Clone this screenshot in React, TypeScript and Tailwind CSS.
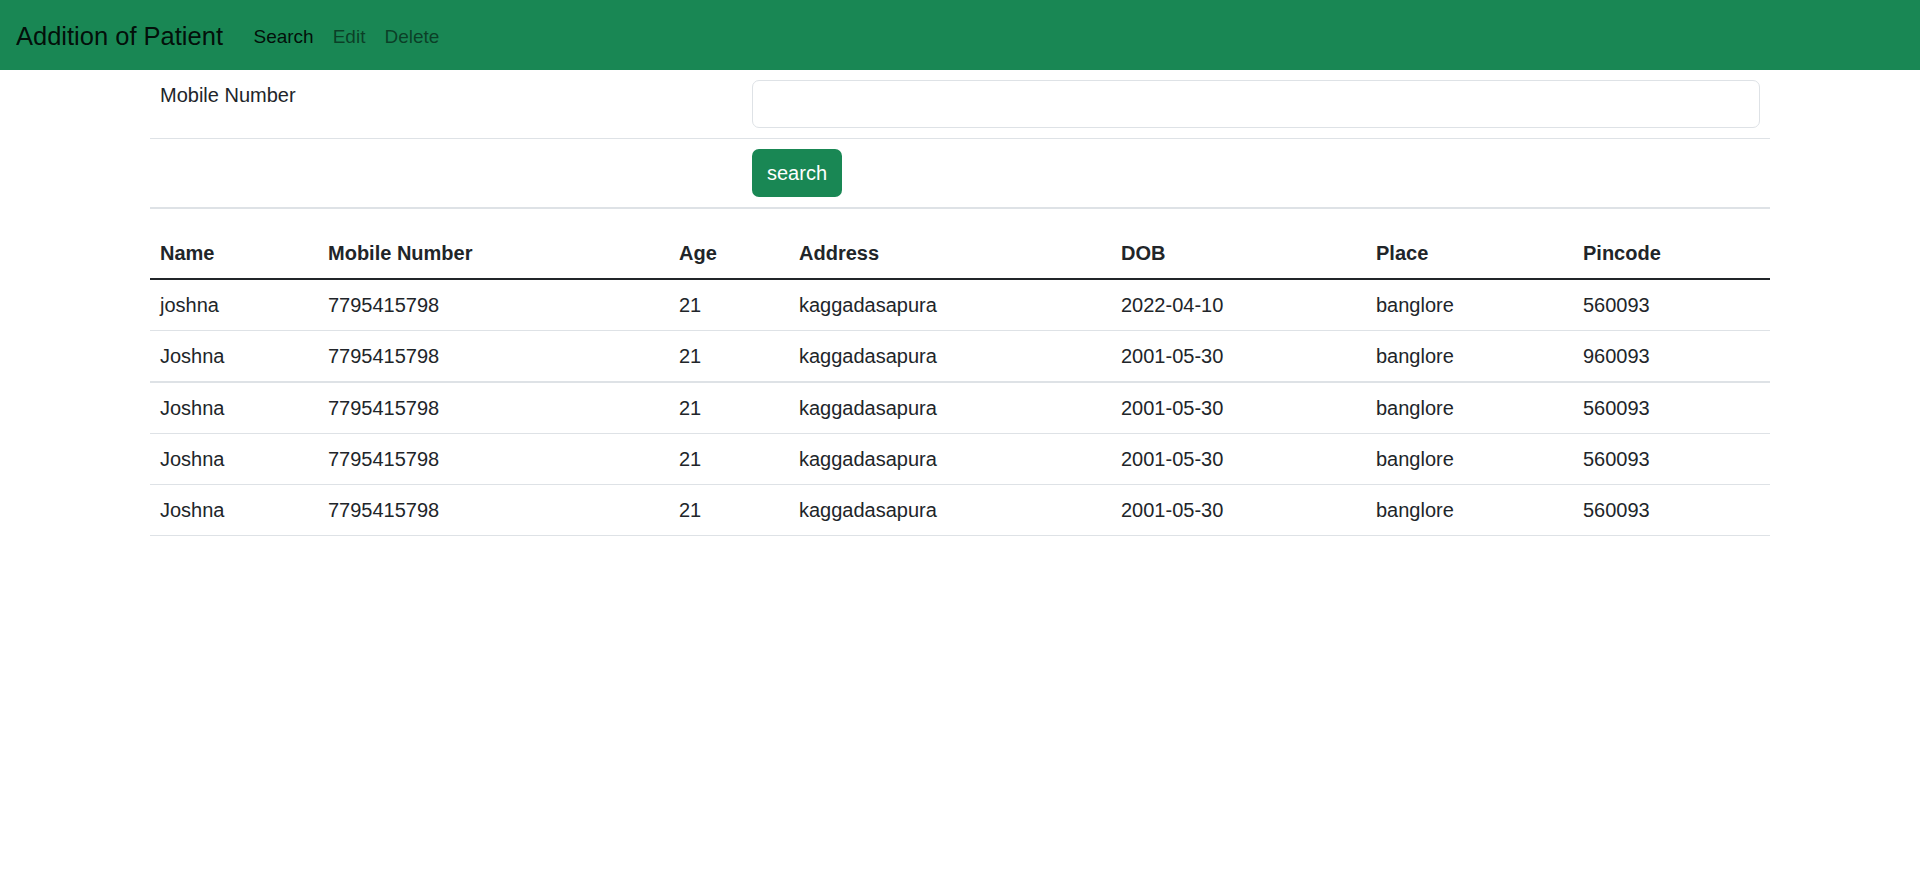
import React from 'react';

const rows = [
  { name: 'joshna', mobile: '7795415798', age: '21', address: 'kaggadasapura', dob: '2022-04-10', place: 'banglore', pin: '560093' },
  { name: 'Joshna', mobile: '7795415798', age: '21', address: 'kaggadasapura', dob: '2001-05-30', place: 'banglore', pin: '960093' },
  { name: 'Joshna', mobile: '7795415798', age: '21', address: 'kaggadasapura', dob: '2001-05-30', place: 'banglore', pin: '560093' },
  { name: 'Joshna', mobile: '7795415798', age: '21', address: 'kaggadasapura', dob: '2001-05-30', place: 'banglore', pin: '560093' },
  { name: 'Joshna', mobile: '7795415798', age: '21', address: 'kaggadasapura', dob: '2001-05-30', place: 'banglore', pin: '560093' },
];

const App: React.FC = () => {
  return (
    <div className="min-h-screen bg-white font-['Segoe_UI','Liberation_Sans',Arial,sans-serif] text-[20px] leading-[30px] text-[#212529]">
      <nav className="h-[70px] bg-[#198754] flex items-center pl-[16px] pr-[15px]">
        <span className="pt-[2px] text-[25.5px] leading-[38px] text-black/90 mr-[21px]">Addition of Patient</span>
        <a href="#" className="pt-[4px] px-[9.5px] text-[19px] text-black/90">Search</a>
        <a href="#" className="pt-[4px] px-[9.5px] text-[19px] text-black/55">Edit</a>
        <a href="#" className="pt-[4px] px-[9.5px] text-[19px] text-black/55">Delete</a>
      </nav>

      <div className="mx-auto w-[1650px] px-[15px]">
        <div className="mb-[19px]">
          <div className="flex border-b border-[#dee2e6]">
            <div className="w-[592px] p-[10px]">Mobile Number</div>
            <div className="flex-1 p-[10px]">
              <input
                type="text"
                className="block w-full h-[48px] border border-[#dee2e6] rounded-[7px] px-[15px] outline-none"
              />
            </div>
          </div>
          <div className="flex border-b-2 border-[#dee2e6]">
            <div className="w-[592px] p-[10px]"></div>
            <div className="flex-1 p-[10px]">
              <button className="h-[48px] px-[15px] bg-[#198754] text-white rounded-[7px]">search</button>
            </div>
          </div>
        </div>

        <table className="w-full table-fixed border-collapse text-left">
          <thead>
            <tr className="border-b-2 border-[#212529] font-bold">
              <th className="w-[168px] p-[10px]">Name</th>
              <th className="w-[351px] p-[10px]">Mobile Number</th>
              <th className="w-[120px] p-[10px]">Age</th>
              <th className="w-[322px] p-[10px]">Address</th>
              <th className="w-[255px] p-[10px]">DOB</th>
              <th className="w-[207px] p-[10px]">Place</th>
              <th className="w-[197px] p-[10px]">Pincode</th>
            </tr>
          </thead>
          <tbody>
            {rows.map((r, i) => (
              <tr key={i} className={i === 1 ? 'border-b-2 border-[#dee2e6]' : 'border-b border-[#dee2e6]'}>
                <td className="p-[10px]">{r.name}</td>
                <td className="p-[10px]">{r.mobile}</td>
                <td className="p-[10px]">{r.age}</td>
                <td className="p-[10px]">{r.address}</td>
                <td className="p-[10px]">{r.dob}</td>
                <td className="p-[10px]">{r.place}</td>
                <td className="p-[10px]">{r.pin}</td>
              </tr>
            ))}
          </tbody>
        </table>
      </div>
    </div>
  );
};

export default App;
